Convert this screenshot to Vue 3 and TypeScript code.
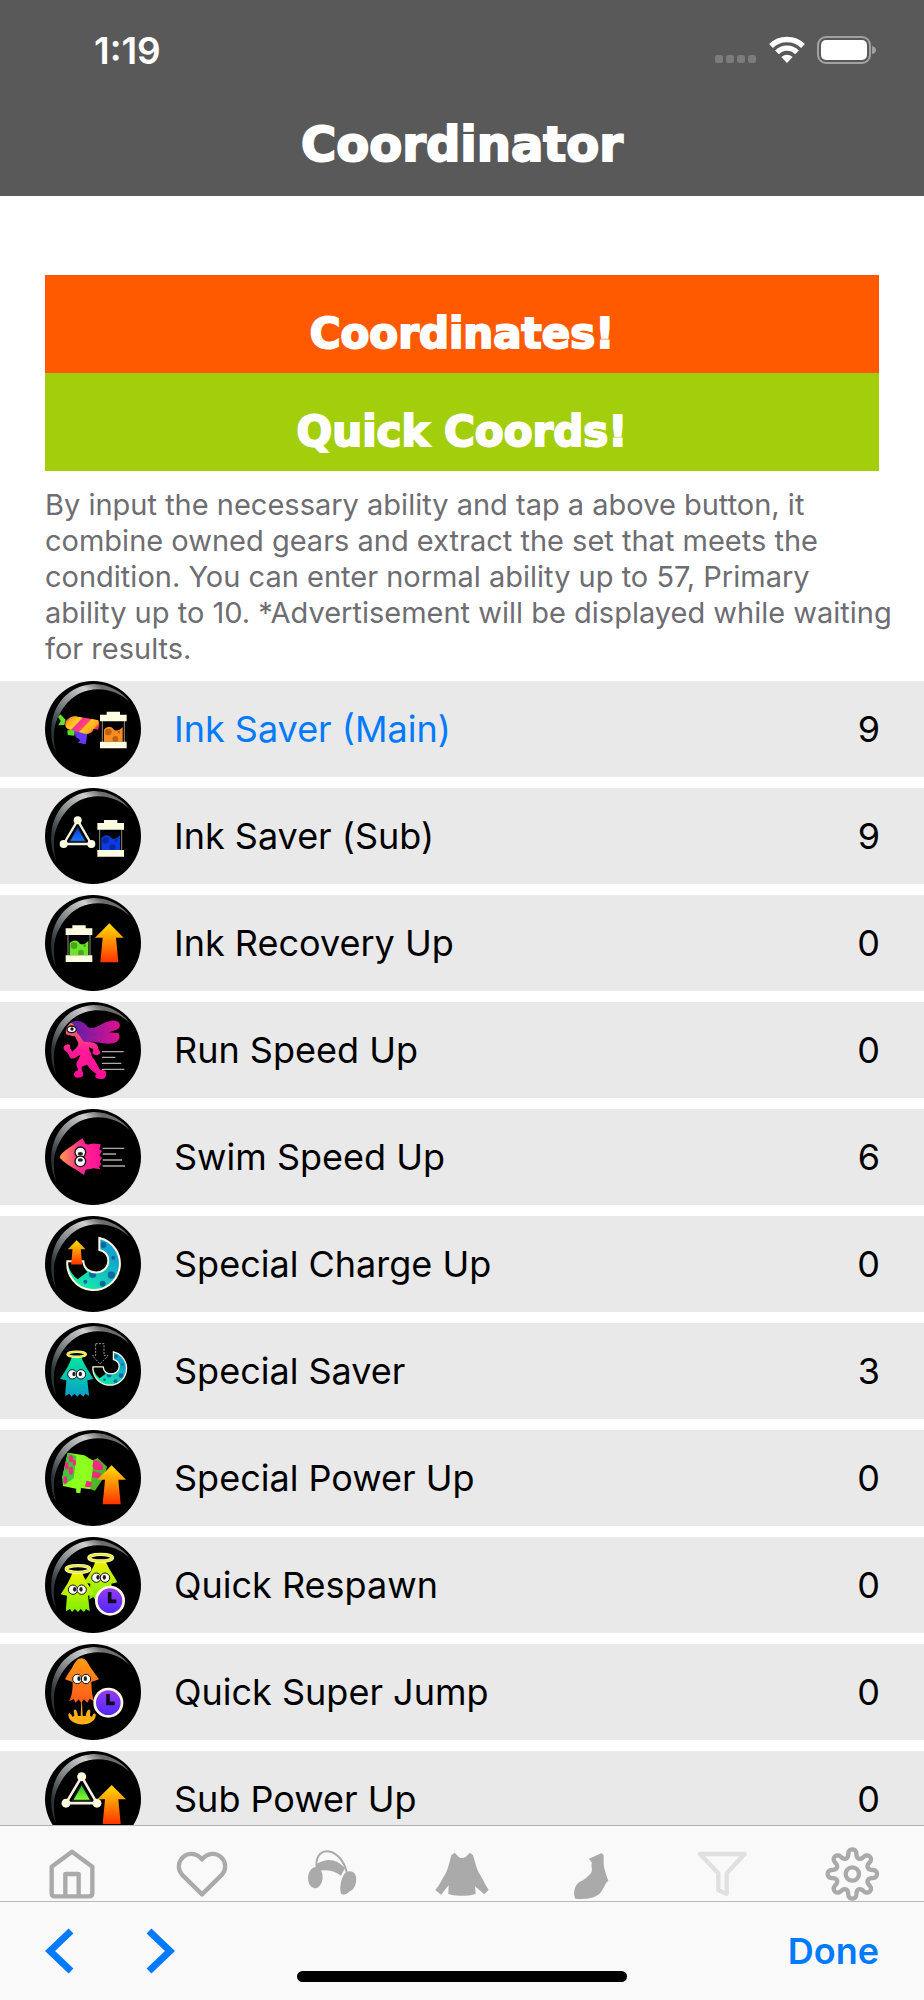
<script setup lang="ts">
import { ref } from 'vue'

interface Part {
  id: string
  x?: number
  y?: number
  scale?: number
  fill?: string
}

interface Ability {
  key: string
  name: string
  value: string
  parts: Part[]
}

interface Tab {
  label: string
  icon: string
  viewBox: string
}

const abilities = ref<Ability[]>([
  {
    key: 'ink-saver-main', name: 'Ink Saver (Main)', value: '9',
    parts: [{ id: 'blaster' }, { id: 'tank', x: 165, y: 92, fill: '#ff8c1f' }],
  },
  {
    key: 'ink-saver-sub', name: 'Ink Saver (Sub)', value: '9',
    parts: [{ id: 'bomb', x: 98, y: 97, fill: 'url(#blue)' }, { id: 'tank', x: 157, y: 96, fill: '#0c3be0' }],
  },
  {
    key: 'ink-recovery', name: 'Ink Recovery Up', value: '0',
    parts: [{ id: 'tank', x: 62, y: 91, fill: '#6be52a' }, { id: 'arrow', x: 193, y: 85 }],
  },
  { key: 'run-speed', name: 'Run Speed Up', value: '0', parts: [{ id: 'runner' }, { id: 'speed', x: 171, y: 149 }] },
  { key: 'swim-speed', name: 'Swim Speed Up', value: '6', parts: [{ id: 'swimmer' }, { id: 'speed', x: 173, y: 118 }] },
  {
    key: 'special-charge', name: 'Special Charge Up', value: '0',
    parts: [{ id: 'gauge', x: 147, y: 143 }, { id: 'arrow', x: 95, y: 73, scale: 0.62 }],
  },
  {
    key: 'special-saver', name: 'Special Saver', value: '3',
    parts: [
      { id: 'squid', x: 95, y: 102, fill: 'url(#teal)' },
      { id: 'halo', x: 95, y: 94, scale: 0.85 },
      { id: 'gauge', x: 195, y: 136, scale: 0.64 },
      { id: 'drop' },
    ],
  },
  { key: 'special-power', name: 'Special Power Up', value: '0', parts: [{ id: 'launcher' }, { id: 'arrow', x: 200, y: 106 }] },
  {
    key: 'quick-respawn', name: 'Quick Respawn', value: '0',
    parts: [
      { id: 'squid', x: 167, y: 70, fill: 'url(#lime)' },
      { id: 'halo', x: 167, y: 62, scale: 1.1 },
      { id: 'squid', x: 97, y: 106, fill: 'url(#lime)' },
      { id: 'halo', x: 99, y: 96, scale: 1.1 },
      { id: 'clock', x: 195, y: 191 },
    ],
  },
  { key: 'super-jump', name: 'Quick Super Jump', value: '0', parts: [{ id: 'jumper' }, { id: 'clock', x: 190, y: 176 }] },
  {
    key: 'sub-power', name: 'Sub Power Up', value: '0',
    parts: [{ id: 'bomb', x: 110, y: 77, scale: 1.12, fill: 'url(#green)' }, { id: 'arrow', x: 200, y: 102 }],
  },
])

const active = ref('ink-saver-main')

const tabs: Tab[] = [
  { label: 'Home', icon: 'tab-home', viewBox: '125 108 180 165' },
  { label: 'Favorites', icon: 'tab-heart', viewBox: '515 108 180 165' },
  { label: 'Head gear', icon: 'tab-head', viewBox: '65 18 180 165' },
  { label: 'Clothes', icon: 'tab-shirt', viewBox: '456 18 180 165' },
  { label: 'Shoes', icon: 'tab-sock', viewBox: '846 18 180 165' },
  { label: 'Filter', icon: 'tab-filter', viewBox: '690 108 180 165' },
  { label: 'Settings', icon: 'tab-gear', viewBox: '1080 108 180 165' },
]

function placement(part: Part): string {
  return `translate(${part.x ?? 0} ${part.y ?? 0}) scale(${part.scale ?? 1})`
}

// Outline of the eight-lobed settings wheel.
function wheel(cx: number, cy: number, mean: number, swing: number): string {
  const steps = 160
  const points: string[] = []
  for (let i = 0; i < steps; i++) {
    const t = (i / steps) * Math.PI * 2
    const r = mean + swing * Math.cos(8 * t)
    const a = t + 0.035 * Math.sin(16 * t)
    points.push(`${(cx + r * Math.sin(a)).toFixed(1)} ${(cy - r * Math.cos(a)).toFixed(1)}`)
  }
  return `M${points.join('L')}Z`
}

const gearPath = wheel(1171, 192, 62, 12)
</script>

<template>
  <div class="app">
    <svg class="sprites" aria-hidden="true">
      <defs>
        <linearGradient id="gloss" x1="0" y1="0.6" x2="0.6" y2="0">
          <stop offset="0" stop-color="#2c3538" /><stop offset="0.4" stop-color="#83888a" />
          <stop offset="0.8" stop-color="#d0d0d0" /><stop offset="1" stop-color="#6d6d6d" />
        </linearGradient>
        <linearGradient id="fire" x1="0" y1="0" x2="0" y2="1">
          <stop offset="0" stop-color="#ffe000" /><stop offset="0.45" stop-color="#ff9200" /><stop offset="1" stop-color="#ff3300" />
        </linearGradient>
        <linearGradient id="blue" x1="0" y1="0" x2="0" y2="1">
          <stop offset="0" stop-color="#0b36d8" /><stop offset="1" stop-color="#1a78ff" />
        </linearGradient>
        <linearGradient id="green" x1="0" y1="0" x2="0" y2="1">
          <stop offset="0" stop-color="#20b82c" /><stop offset="1" stop-color="#8cff2c" />
        </linearGradient>
        <linearGradient id="teal" x1="0" y1="0" x2="0" y2="1">
          <stop offset="0" stop-color="#00e6a0" /><stop offset="1" stop-color="#0c9fc8" />
        </linearGradient>
        <linearGradient id="lime" x1="0" y1="0" x2="0" y2="1">
          <stop offset="0" stop-color="#f2f000" /><stop offset="1" stop-color="#7cf000" />
        </linearGradient>
        <linearGradient id="ring" x1="0" y1="1" x2="0.7" y2="0.2">
          <stop offset="0" stop-color="#16ffa0" /><stop offset="1" stop-color="#12a3cf" />
        </linearGradient>
        <linearGradient id="violet" x1="0" y1="0" x2="0" y2="1">
          <stop offset="0" stop-color="#9a3cf0" /><stop offset="1" stop-color="#4a28ff" />
        </linearGradient>
        <linearGradient id="body" x1="0" y1="0" x2="0" y2="1">
          <stop offset="0" stop-color="#ff7a55" /><stop offset="0.5" stop-color="#ff1a98" /><stop offset="1" stop-color="#ff0f96" />
        </linearGradient>
        <linearGradient id="hair">
          <stop offset="0" stop-color="#5c1fa8" /><stop offset="1" stop-color="#e0108f" />
        </linearGradient>
        <linearGradient id="side">
          <stop offset="0" stop-color="#ff9a4a" /><stop offset="0.5" stop-color="#ff2a90" /><stop offset="1" stop-color="#ff0f96" />
        </linearGradient>
        <linearGradient id="orange" x1="0" y1="0" x2="0" y2="1">
          <stop offset="0" stop-color="#ff9b12" /><stop offset="1" stop-color="#ff5a1c" />
        </linearGradient>
        <linearGradient id="candy" x1="0" y1="0.2" x2="1" y2="0.7">
          <stop offset="0" stop-color="#ff2a8c" /><stop offset="0.12" stop-color="#ffa81e" /><stop offset="0.34" stop-color="#ffd21e" />
          <stop offset="0.38" stop-color="#ff2aa0" /><stop offset="0.58" stop-color="#ff4a6c" /><stop offset="0.62" stop-color="#ffc81e" />
          <stop offset="0.85" stop-color="#ffa81e" /><stop offset="0.9" stop-color="#f0286e" />
        </linearGradient>

        <g id="tank">
          <rect x="7" y="24" width="66" height="70" fill="#000" stroke="#8f8d7c" stroke-width="3" />
          <path d="M12 54C22 42 34 44 40 52S58 58 68 46V90H12Z" />
          <g fill="#000" opacity="0.28"><circle cx="25" cy="61" r="10" /><circle cx="57" cy="61" r="4" /><circle cx="46" cy="82" r="9" /></g>
          <path d="M20 0H60V9H80V29H0V9H20ZM0 90H80V110H0Z" fill="#fffbe0" />
        </g>
        <g id="arrow"><path d="M0 0 43 43H20L27 117H-27L-20 43H-43Z" fill="url(#fire)" /></g>
        <g id="bomb">
          <path d="M0 21-24 63H24Z" stroke="#17222e" stroke-width="3" />
          <path d="M0 0-42 71H41Z" fill="none" stroke="#f5f1df" stroke-width="7" />
          <g fill="#fffbe0"><circle r="12" /><circle cx="-42" cy="71" r="12" /><circle cx="41" cy="71" r="12" /></g>
        </g>
        <g id="halo">
          <ellipse rx="32" ry="9" fill="none" stroke="#fffbd0" stroke-width="9" />
          <ellipse rx="32" ry="9" fill="none" stroke="#e8ee30" stroke-width="5" />
        </g>
        <g id="eyes">
          <g fill="#fff" stroke="#111" stroke-width="3"><circle cx="-13" r="14" /><circle cx="13" r="14" /></g>
          <g fill="#222"><ellipse cx="-8" cy="-1" rx="5" ry="7" /><ellipse cx="11" cy="-1" rx="5" ry="7" /></g>
        </g>
        <g id="squid">
          <path d="M-14 0H14C22 24 40 46 50 66L32 70C34 90 36 102 37 117L26 110 20 119 10 110 2 119-7 110-16 119-22 110-34 117C-34 100-32 86-31 70L-50 66C-36 46-22 24-14 0Z" />
          <use href="#eyes" y="52" />
        </g>
        <g id="gauge">
          <path d="M16-77A79 79 0 1 1-80-7H-32C-29 38 43 38 43-10 43-27 30-39 16-41Z" fill="url(#ring)" />
          <g fill="#0a6aa0"><circle cx="58" cy="-18" r="6" /><circle cx="52" cy="34" r="11" /><circle cx="26" cy="60" r="9" /><circle cx="-4" cy="32" r="11" /><circle cx="-26" cy="54" r="6" /><circle cx="28" cy="-56" r="9" /></g>
          <path d="M-80-7H-32C-31 8-28 16-20 25L-49 47C-68 32-78 12-80-7Z" fill="#000" />
          <path d="M16-77A79 79 0 1 1-80-7H-32C-29 38 43 38 43-10 43-27 30-39 16-41Z" fill="none" stroke="#fff8dc" stroke-width="6" />
        </g>
        <g id="clock">
          <circle r="41" fill="url(#violet)" stroke="#fff6dc" stroke-width="8" />
          <path d="M-1-26V2H19" fill="none" stroke="#10081c" stroke-width="11" />
        </g>
        <g id="speed"><path d="M0 0H65M0 17H40M0 35H58M0 53H67" stroke="#aaa" stroke-width="4" /></g>

        <g id="blaster">
          <path d="M46 100 62 116 58 132 40 133 47 120 39 108Z" fill="#67e02a" />
          <path d="M67 148 90 146 88 164 68 162Z" fill="#59df20" />
          <path d="M88 148 128 153 122 190 98 185 106 178 92 168Z" fill="#6837f4" />
          <path d="M62 122C68 112 82 103 98 107L146 115 160 118 163 132 159 146 146 144C142 158 128 162 112 156L70 145C61 140 59 132 62 122Z" fill="url(#candy)" />
        </g>
        <g id="runner">
          <path d="M79 61C92 54 117 56 129 76C155 84 169 60 199 56C219 53 229 66 223 76C219 85 204 86 192 91L221 94C228 107 220 122 203 124C180 128 160 119 137 119C119 128 104 120 98 108Z" fill="url(#hair)" />
          <path d="M100 82Q145 106 190 90L148 98Z" fill="#a9078f" opacity="0.6" />
          <path d="M79 62C66 68 62 82 62 94C66 102 82 102 90 103L98 119C105 130 92 138 82 149L75 139C80 126 64 122 57 133C52 140 61 148 66 150L77 169C89 173 99 160 106 159C101 177 90 182 96 194L100 204C91 207 82 214 90 224C96 230 110 226 114 222C117 211 109 208 110 194L126 188C136 203 146 210 155 216C147 221 151 231 163 230C176 233 184 226 183 218C188 206 174 202 166 205C158 194 151 173 141 165C140 153 131 144 132 136L145 142 142 153C151 163 162 160 166 153C164 144 158 140 158 131C151 119 139 121 125 119C113 124 110 107 102 99C91 92 97 74 79 62Z" fill="url(#body)" />
          <ellipse cx="80" cy="82" rx="14" ry="10" fill="#fff" stroke="#111" stroke-width="4" /><circle cx="81" cy="81" r="5" fill="#111" />
        </g>
        <g id="swimmer">
          <path d="M44 145C48 132 64 122 79 112L112 88 122 105C134 109 143 101 150 104L167 106 163 121 171 126 163 139 171 147 164 158 169 165 162 174 166 181 146 178 122 182 117 198 95 183C70 169 51 157 44 145Z" fill="url(#side)" />
          <g fill="#fff" stroke="#111" stroke-width="4"><circle cx="106" cy="130" r="16" /><circle cx="106" cy="157" r="16" /></g>
          <g fill="#222"><ellipse cx="106" cy="134" rx="8" ry="5" /><ellipse cx="106" cy="153" rx="8" ry="5" /></g>
        </g>
        <g id="drop"><path d="M152 62H177V98H189L165 123 142 98H152Z" fill="none" stroke="#9a9a9a" stroke-width="3" stroke-dasharray="6 4" /></g>
        <g id="launcher">
          <path d="M132 96 158 84 186 110 178 140 150 182 120 172Z" fill="#4fb529" />
          <path d="M68 68 118 76 146 93 136 178 108 174 106 190 94 188 93 176 54 168 52 142Z" fill="#8cff1e" />
          <path d="M68 68 94 78 86 145 56 166 52 142Z" fill="#3cc83c" />
          <g fill="#f02a82"><ellipse cx="78" cy="86" rx="7" ry="11" /><ellipse cx="65" cy="108" rx="6" ry="11" /><ellipse cx="78" cy="122" rx="7" ry="12" /><ellipse cx="61" cy="150" rx="6" ry="11" /><ellipse cx="88" cy="98" rx="5" ry="9" /><path d="M146 90 162 94 173 106 174 120 150 120 142 110ZM144 124 168 130 162 145 140 142ZM124 152 141 156 137 172 120 170Z" /></g>
        </g>
        <g id="jumper">
          <path d="M109 43C121 42 130 58 136 70L162 106 139 114C140 134 140 148 147 172L134 164 127 176 117 166 109 177 101 166 92 176 86 165 73 172C82 152 83 134 83 114L60 106C66 92 78 78 86 62C94 50 98 44 109 43Z" fill="url(#orange)" />
          <use href="#eyes" x="110" y="105" />
          <path d="M70 214C69 204 78 206 82 218L88 216 86 202C89 190 97 198 99 216L107 216 109 175H111L113 216 122 216C125 198 133 190 136 202L135 216 141 218C145 206 154 205 152 216C148 250 74 250 70 214Z" fill="#ffae18" />
        </g>

        <g id="tab-home" class="line">
          <path d="M215 125 276 170V249Q276 259 266 259H163Q154 259 154 249V170ZM195 258V192H235V258" />
        </g>
        <g id="tab-heart" class="line">
          <path d="M605 253 545 194C514 156 566 105 605 148 644 105 696 156 665 194Z" />
        </g>
        <g id="tab-head">
          <path d="M108 76C108 10 182 24 199 96" fill="none" stroke="#aaa" stroke-width="6" />
          <path d="M106 74Q155 42 194 84L182 107Q150 84 106 94Z" />
          <ellipse cx="105" cy="113" rx="22" ry="32" transform="rotate(4 105 113)" />
          <path d="M198 96C218 88 232 104 227 126 225 139 219 150 208 154 202 162 191 167 182 161 176 140 184 106 198 96Z" />
        </g>
        <g id="tab-shirt">
          <path d="M514 46 524 38 537 52Q546 57 557 51L570 38 579 46C586 68 590 89 599 102 609 117 615 136 626 149L613 163 585 139 587 162Q568 169 546 167 521 168 505 162L506 136 483 164 466 150C480 134 486 116 496 102 505 87 509 63 514 46Z" />
        </g>
        <g id="tab-sock">
          <path d="M927 56 965 39 971 46 971 75C974 91 979 108 985 122 975 128 973 146 958 162 940 176 917 178 886 176 877 157 886 134 898 126 911 121 922 112 933 99 940 88 931 78 936 69Z" />
        </g>
        <g id="tab-filter" class="line faint">
          <path d="M714 132H848L794 190V252L769 240V190Z" />
        </g>
        <g id="tab-gear" class="line">
          <path :d="gearPath" /><circle cx="1171" cy="192" r="20" />
        </g>
      </defs>
    </svg>

    <header class="header">
      <div class="status">
        <time class="clock">1:19</time>
        <div class="indicators">
          <svg width="42" height="28" viewBox="0 0 42 28" aria-label="No cellular signal">
            <g fill="#7c7c7c"><rect y="19" width="8" height="8" rx="2.5" /><rect x="11" y="19" width="8" height="8" rx="2.5" /><rect x="22" y="19" width="8" height="8" rx="2.5" /><rect x="33" y="19" width="8" height="8" rx="2.5" /></g>
          </svg>
          <svg width="36" height="28" viewBox="0 0 108 84" aria-label="Wi-Fi">
            <g fill="none" stroke="#fff" stroke-width="16"><path d="M6 30C32 4 76 4 102 30" /><path d="M24 49C41 32 67 32 84 49" /></g>
            <path d="M37 63Q54 50 71 63L54 81Z" fill="#fff" />
          </svg>
          <svg width="59" height="28" viewBox="0 0 59 28" aria-label="Battery full">
            <rect x="1" y="1" width="52" height="26" rx="8" fill="none" stroke="#a1a1a1" stroke-width="2" />
            <rect x="4" y="4" width="46" height="20" rx="5" fill="#fff" />
            <path d="M55 10Q59 11 59 14T55 18Z" fill="#a1a1a1" />
          </svg>
        </div>
      </div>
      <h1 class="title">Coordinator</h1>
    </header>

    <main class="content">
      <div class="actions">
        <button type="button" class="action orange">Coordinates!</button>
        <button type="button" class="action lime">Quick Coords!</button>
      </div>
      <p class="hint">
        By input the necessary ability and tap a above button, it combine owned gears and extract the set that meets the condition. You can enter normal ability up to 57, Primary ability up to 10. *Advertisement will be displayed while waiting for results.
      </p>
      <ul class="abilities">
        <li v-for="ability in abilities" :key="ability.key" class="ability">
          <svg class="badge" viewBox="0 0 288 288" aria-hidden="true">
            <circle cx="144" cy="144" r="144" fill="#000" />
            <path d="M34 218C-4 145 26 18 145 9 194 8 236 36 254 64 218 22 115 -3 57 78 26 121 19 166 34 218Z" fill="url(#gloss)" />
            <use
              v-for="(part, index) in ability.parts"
              :key="index"
              :href="'#' + part.id"
              :transform="placement(part)"
              :fill="part.fill"
            />
          </svg>
          <label :for="ability.key" class="name" :class="{ selected: active === ability.key }">{{ ability.name }}</label>
          <input
            :id="ability.key"
            v-model="ability.value"
            class="value"
            type="text"
            inputmode="numeric"
            @focus="active = ability.key"
          />
        </li>
      </ul>
    </main>

    <nav class="tabs" aria-label="Sections">
      <a v-for="tab in tabs" :key="tab.icon" href="#" class="tab" :aria-label="tab.label">
        <svg class="tab-icon" :viewBox="tab.viewBox" aria-hidden="true"><use :href="'#' + tab.icon" /></svg>
      </a>
    </nav>

    <footer class="toolbar">
      <button type="button" class="step" aria-label="Previous field">
        <svg width="30" height="46" viewBox="0 0 30 46"><path d="M26 3 5 23 26 43" /></svg>
      </button>
      <button type="button" class="step" aria-label="Next field">
        <svg width="30" height="46" viewBox="0 0 30 46"><path d="M4 3 25 23 4 43" /></svg>
      </button>
      <button type="button" class="done">Done</button>
      <span class="home-indicator"></span>
    </footer>
  </div>
</template>

<style>
body {
  background: #fff;
}
</style>

<style scoped>
.app {
  display: flex;
  flex-direction: column;
  height: 100vh;
  background: #fff;
  color: #000;
  font-family: Inter, "Liberation Sans", sans-serif;
}
.sprites {
  position: absolute;
  width: 0;
  height: 0;
}
button {
  padding: 0;
  border: 0;
  background: none;
  font-family: inherit;
}
.header {
  flex: none;
  height: 196px;
  background: #595959;
  color: #fff;
}
.status {
  display: flex;
  align-items: center;
  justify-content: space-between;
  height: 100px;
  padding: 0 48px 0 94px;
}
.clock {
  font-size: 37px;
  font-weight: 600;
}
.indicators {
  display: flex;
  gap: 12px;
}
.title,
.action {
  font-family: "DejaVu Sans", sans-serif;
  font-weight: 700;
  -webkit-text-stroke: 2px #fff;
}
.title {
  margin: 0;
  font-size: 48px;
  line-height: 88px;
  text-align: center;
}
.content {
  flex: 1;
  min-height: 0;
  overflow: auto;
  scrollbar-width: none;
  padding-top: 79px;
}
.actions {
  display: flex;
  flex-direction: column;
  margin: 0 45px;
}
.action {
  height: 98px;
  padding-top: 18px;
  color: #fff;
  font-size: 42px;
}
.action.orange {
  background: #ff5a00;
}
.action.lime {
  background: #a2ce0b;
}
.hint {
  margin: 16px 28px 14px 45px;
  color: #6d6d72;
  font-size: 29px;
  line-height: 36px;
}
.abilities {
  display: flex;
  flex-direction: column;
  gap: 11px;
  margin: 0;
  padding: 0;
  list-style: none;
}
.ability {
  display: flex;
  align-items: center;
  height: 96px;
  padding: 0 44px 0 45px;
  background: #e9e9e9;
}
.badge {
  flex: none;
  width: 96px;
  height: 96px;
  margin-right: 33px;
}
.name {
  flex: 1;
  font-size: 36px;
}
.name.selected {
  color: #007aff;
}
.value {
  width: 120px;
  padding: 0;
  border: 0;
  outline: 0;
  background: transparent;
  color: inherit;
  font-family: inherit;
  font-size: 36px;
  text-align: right;
}
.tabs {
  flex: none;
  display: flex;
  padding: 20px 7px 0;
  border-top: 1px solid #b4b4b4;
  background: #f9f9f9;
}
.tab {
  flex: 1;
  display: flex;
  justify-content: center;
}
.tab-icon {
  width: 60px;
  height: 55px;
  fill: #aaa;
}
.line {
  fill: none;
  stroke: #aaa;
  stroke-width: 13px;
  stroke-linejoin: round;
}
.faint {
  stroke: #e0e0e0;
}
.toolbar {
  position: relative;
  flex: none;
  display: flex;
  align-items: center;
  gap: 70px;
  height: 98px;
  padding: 0 45px;
  border-top: 1px solid #b9b9b9;
  background: #f9f9f9;
}
.step svg {
  display: block;
  fill: none;
  stroke: #007aff;
  stroke-width: 7px;
}
.done {
  margin-left: auto;
  color: #007aff;
  font-size: 36px;
  font-weight: 600;
}
.home-indicator {
  position: absolute;
  bottom: 18px;
  left: 50%;
  width: 330px;
  height: 11px;
  border-radius: 6px;
  background: #000;
  transform: translateX(-50%);
}
</style>
